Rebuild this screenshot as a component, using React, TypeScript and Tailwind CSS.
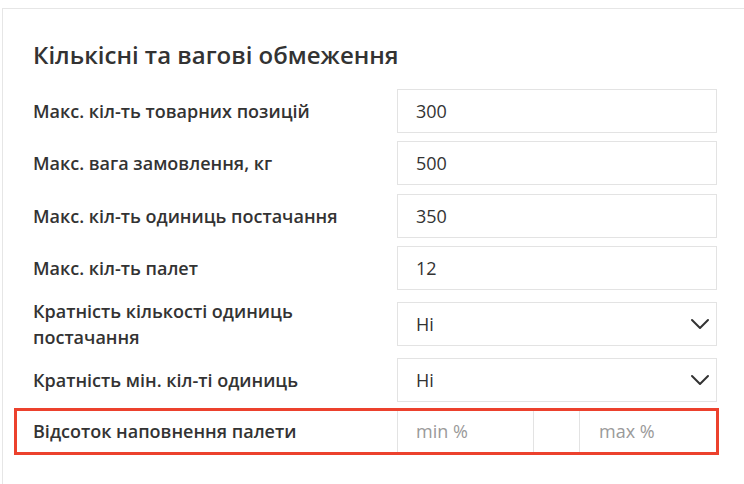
import { ChevronDown } from 'lucide-react';

const textRows = [
  { label: 'Макс. кіл-ть товарних позицій', value: '300', mt: 'mt-0' },
  { label: 'Макс. вага замовлення, кг', value: '500', mt: 'mt-[8px]' },
  { label: 'Макс. кіл-ть одиниць постачання', value: '350', mt: 'mt-[9px]' },
  { label: 'Макс. кіл-ть палет', value: '12', mt: 'mt-[8px]' },
];

const selectRows = [
  { label: 'Кратність кількості одиниць постачання', value: 'Ні', mt: 'mt-[12px]' },
  { label: 'Кратність мін. кіл-ті одиниць', value: 'Ні', mt: 'mt-[12px]' },
];

export default function App() {
  return (
    <div className="w-[744px] h-[484px] overflow-hidden bg-white pt-2 pl-[2px] font-['Open_Sans',sans-serif] text-[#333]">
      <div className="h-full border-t border-l border-[#e6e6e6] pl-[30px] pr-[27px]">
        {/* Header */}
        <h2 className="mt-[30px] text-[24px] leading-[32px] font-semibold">
          Кількісні та вагові обмеження
        </h2>

        <div className="mt-[18px] flex flex-col">
          {/* Plain inputs */}
          {textRows.map((row) => (
            <div key={row.label} className={`flex h-[44px] items-center ${row.mt}`}>
              <label className="flex-1 pr-4 text-[18px] font-semibold leading-6">{row.label}</label>
              <div className="flex h-full w-[320px] items-center border border-[#e3e3e3] pl-[18px] text-[18px]">
                {row.value}
              </div>
            </div>
          ))}

          {/* Selects */}
          {selectRows.map((row) => (
            <div key={row.label} className={`flex h-[44px] items-center ${row.mt}`}>
              <label className="flex-1 pr-4 text-[18px] font-semibold leading-[26px]">{row.label}</label>
              <div className="flex h-full w-[320px] items-center justify-between border border-[#e3e3e3] pl-[18px] text-[18px]">
                <span>{row.value}</span>
                <ChevronDown className="h-[32px] w-[32px] text-[#333]" strokeWidth={1.5} />
              </div>
            </div>
          ))}

          {/* Highlighted range row */}
          <div className="mt-[6px] -ml-[19px] -mr-[2px] flex h-[47px] items-stretch border-[3px] border-[#ec412d] pl-[16px]">
            <label className="flex flex-1 items-center text-[18px] font-semibold">Відсоток наповнення палети</label>
            <div className="flex w-[319px] items-stretch">
              <div className="flex w-[137px] items-center border-x border-[#e3e3e3] pl-[18px] text-[18px] text-[#9a9a9a]">
                min %
              </div>
              <div className="w-[45px]" />
              <div className="flex flex-1 items-center border-l border-[#e3e3e3] pl-[19px] text-[18px] text-[#9a9a9a]">
                max %
              </div>
            </div>
          </div>
        </div>
      </div>
    </div>
  );
}
